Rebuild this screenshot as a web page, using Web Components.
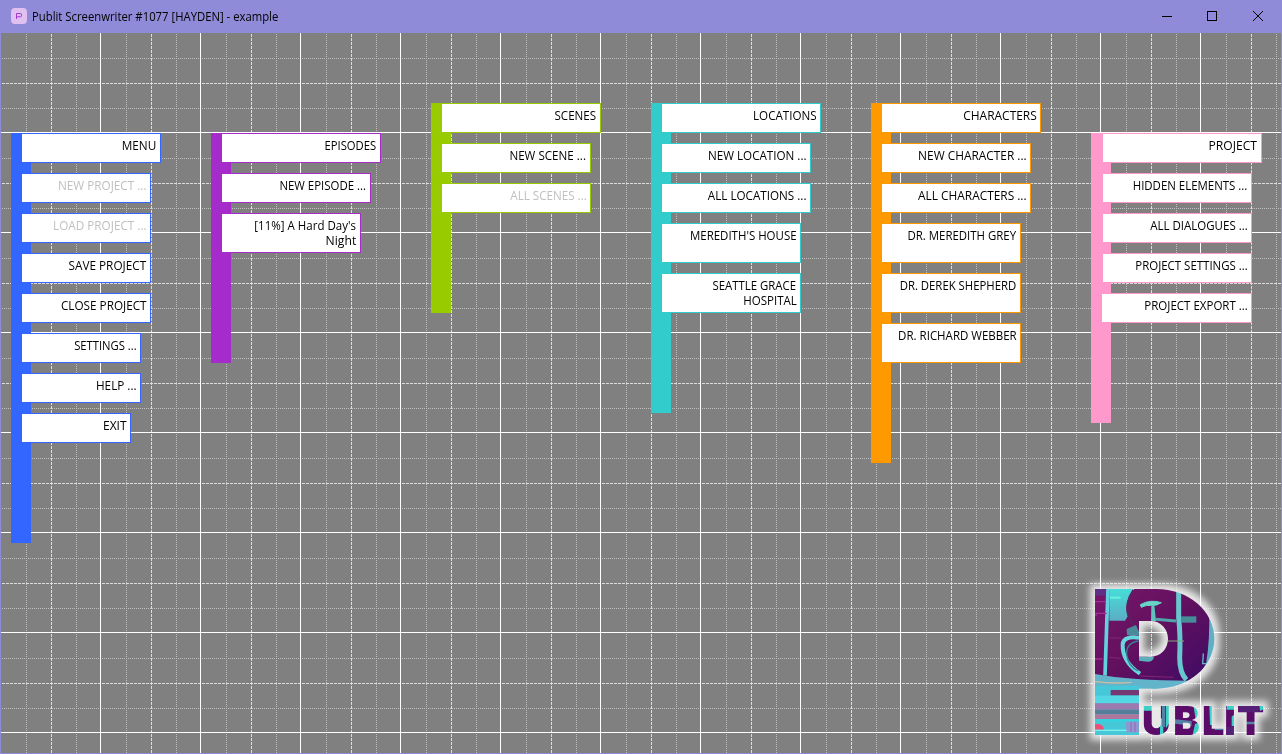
<!DOCTYPE html>
<html lang="en">
<head>
<meta charset="utf-8">
<title>Publit Screenwriter #1077 [HAYDEN] - example</title>
<style>
html,body{margin:0;height:100%;overflow:hidden;font-family:"Open Sans","Noto Sans",sans-serif}
</style>
</head>
<body>
<app-window>
  <title-bar slot="title">Publit Screenwriter #1077 [HAYDEN] - example</title-bar>
  <board-column color="#3366ff" style="margin:30px 0 0 10px;width:150px;height:410px">
    <board-item w="140" fit="34">MENU</board-item>
    <board-item w="130" fit="88" disabled>NEW PROJECT ...</board-item>
    <board-item w="130" fit="93" disabled>LOAD PROJECT ...</board-item>
    <board-item w="130" fit="77">SAVE PROJECT</board-item>
    <board-item w="130" fit="85">CLOSE PROJECT</board-item>
    <board-item w="120" fit="62">SETTINGS ...</board-item>
    <board-item w="120" fit="40">HELP ...</board-item>
    <board-item w="110" fit="23">EXIT</board-item>
  </board-column>
  <board-column color="#a52bcb" style="margin:30px 0 0 50px;width:170px;height:230px">
    <board-item w="160" fit="51">EPISODES</board-item>
    <board-item w="150" fit="86">NEW EPISODE ...</board-item>
    <board-item w="140" h="40" fit="101,30">[11%] A Hard Day's|Night</board-item>
  </board-column>
  <board-column color="#99cc00" style="margin-left:50px;width:170px;height:210px">
    <board-item w="160" fit="41">SCENES</board-item>
    <board-item w="150" fit="76">NEW SCENE ...</board-item>
    <board-item w="150" fit="76" disabled>ALL SCENES ...</board-item>
  </board-column>
  <board-column color="#33cccc" style="margin-left:50px;width:170px;height:310px">
    <board-item w="160" fit="63">LOCATIONS</board-item>
    <board-item w="150" fit="98">NEW LOCATION ...</board-item>
    <board-item w="150" fit="98">ALL LOCATIONS ...</board-item>
    <board-item w="140" h="40" fit="106">MEREDITH'S HOUSE</board-item>
    <board-item w="140" h="40" fit="83,53">SEATTLE GRACE|HOSPITAL</board-item>
  </board-column>
  <board-column color="#ff9900" style="margin-left:50px;width:170px;height:360px">
    <board-item w="160" fit="73">CHARACTERS</board-item>
    <board-item w="150" fit="108">NEW CHARACTER ...</board-item>
    <board-item w="150" fit="108">ALL CHARACTERS ...</board-item>
    <board-item w="140" h="40" fit="108">DR. MEREDITH GREY</board-item>
    <board-item w="140" h="40" fit="116">DR. DEREK SHEPHERD</board-item>
    <board-item w="140" h="40" fit="118">DR. RICHARD WEBBER</board-item>
  </board-column>
  <board-column color="#ff99cc" style="margin:30px 0 0 50px;width:171px;height:290px">
    <board-item w="160" inset="1" fit="48">PROJECT</board-item>
    <board-item w="150" inset="1" fit="114">HIDDEN ELEMENTS ...</board-item>
    <board-item w="150" inset="1" fit="97">ALL DIALOGUES ...</board-item>
    <board-item w="150" inset="1" fit="112">PROJECT SETTINGS ...</board-item>
    <board-item w="151" fit="103">PROJECT EXPORT ...</board-item>
  </board-column>
  <publit-logo slot="logo"></publit-logo>
</app-window>
<script>
const shadow = (el, html) => { el.attachShadow({mode:'open'}).innerHTML = html; return el.shadowRoot; };

// Scales each text line horizontally to its intended advance width.
const fitWidth = (span, width) => {
  const natural = span.getBoundingClientRect().width;
  if (natural) span.style.transform = `scaleX(${width / natural})`;
};

customElements.define('canvas-grid', class extends HTMLElement {
  connectedCallback() {
    let lines = '';
    const add = (pos, vertical) => {
      const k = pos / 25 % 4;
      const p = k === 0 ? pos - 1 : pos;
      const style = k === 0 ? 'stroke="#fff"' : k === 2 ? 'stroke="#dcdcdc" stroke-dasharray="3 1"' : 'stroke="#c0c0c0" stroke-dasharray="1 1"';
      const c = p + .5;
      const start = k === 0 ? 0 : 1;
      lines += vertical ? `<path d="M${c} ${start}V720" ${style}/>` : `<path d="M${start} ${c}H1280" ${style}/>`;
    };
    for (const rest of [1, 2, 0]) {
      for (let p = 25; p <= 1280; p += 25) if ((p / 25 % 4 % 2 ? 1 : p / 25 % 4) === rest) add(p, true);
      for (let p = 25; p <= 720; p += 25) if ((p / 25 % 4 % 2 ? 1 : p / 25 % 4) === rest) add(p, false);
    }
    shadow(this, `<style>:host{display:block;background:#808080}svg{display:block}</style>
      <svg width="1280" height="720" fill="none" shape-rendering="crispEdges">${lines}</svg>`);
  }
});

customElements.define('app-window', class extends HTMLElement {
  connectedCallback() {
    shadow(this, `<style>
      :host{display:flex;flex-direction:column;width:1282px;height:754px;box-sizing:border-box;background:#8f8bd8;border:solid #8f8bd8;border-width:0 1px 1px}
      .canvas{display:grid;height:720px;position:relative}
      canvas-grid,.columns{grid-area:1/1}
      .columns{display:flex;align-items:flex-start;padding-top:70px;position:relative}
      ::slotted(publit-logo){position:absolute;right:-1px;bottom:-1px}
    </style>
    <slot name="title"></slot>
    <div class="canvas"><canvas-grid></canvas-grid><div class="columns"><slot></slot></div><slot name="logo"></slot></div>`);
  }
});

customElements.define('title-bar', class extends HTMLElement {
  connectedCallback() {
    const root = shadow(this, `<style>
      :host{display:flex;align-items:center;height:33px;font-size:12px;color:#000;flex:none}
      .icon{margin:0 5px 1px 10px;flex:none}
      .text{display:inline-block;white-space:nowrap;transform-origin:left;line-height:16px}
      .buttons{margin-left:auto;flex:none}
    </style>
    <svg class="icon" width="16" height="16"><rect width="16" height="16" rx="4" fill="#dfc0f0"/><path d="M5.5 11V5.5H9.5Q10.5 5.5 10.5 7.2T9.5 8.8H5.5" fill="none" stroke="#a33bd0"/></svg>
    <span class="text"><slot></slot></span>
    <svg class="buttons" width="138" height="33" fill="none" stroke="#000"><path d="M19 16.5h10M64.500 11.500h9v9h-9z" shape-rendering="crispEdges"/><path d="M110 11l10 10M120 11l-10 10"/></svg>`);
    fitWidth(root.querySelector('.text'), 246.3);
  }
});

customElements.define('board-column', class extends HTMLElement {
  connectedCallback() {
    shadow(this, `<style>
      :host{--c:${this.getAttribute('color')};display:flex;flex-direction:column;align-items:flex-start;gap:10px;flex:none;box-sizing:border-box;padding-left:10px;background:linear-gradient(var(--c),var(--c)) 0 0/20px 100% no-repeat}
    </style><slot></slot>`);
  }
});

customElements.define('board-item', class extends HTMLElement {
  connectedCallback() {
    const fits = this.getAttribute('fit').split(',');
    const lines = this.textContent.split('|');
    const root = shadow(this, `<style>
      :host{display:block;box-sizing:border-box;flex:none;width:${this.getAttribute('w')}px;height:${this.getAttribute('h') || 30}px;
        margin-left:${this.getAttribute('inset') || 0}px;border:1px solid var(--c);background:#fff;padding:4px 3.600px 0 0;
        font-size:12px;line-height:15px;color:${this.hasAttribute('disabled') ? '#c0c0c0' : '#000'}}
      div{display:flex;justify-content:flex-end}
      span{display:inline-block;white-space:nowrap;transform-origin:right}
    </style>${lines.map(t => `<div><span>${t}</span></div>`).join('')}`);
    root.querySelectorAll('span').forEach((s, i) => fitWidth(s, +fits[i] + .6));
  }
});

customElements.define('publit-logo', class extends HTMLElement {
  connectedCallback() {
    shadow(this, `<style>:host{display:block}svg{display:block}text{font:900 119px Inter,sans-serif}</style>
    <svg width="202" height="184" viewBox="0 0 606 552">
      <defs>
        <linearGradient id="violet" x2="1" y2="1"><stop stop-color="#80196f"/><stop offset=".35" stop-color="#62105f"/><stop offset=".7" stop-color="#350a66"/></linearGradient>
        <linearGradient id="aqua" x2="0" y2="1"><stop stop-color="#46ddd8"/><stop offset="1" stop-color="#5badc5"/></linearGradient>
        <linearGradient id="rim" x2="1"><stop stop-color="#68d5df"/><stop offset="1" stop-color="#539db6"/></linearGradient>
        <mask id="shape" maskUnits="userSpaceOnUse" x="0" y="0" width="606" height="552">
          <rect x="45" y="57" width="185" height="299" fill="#fff"/>
          <ellipse cx="230" cy="206.500" rx="173" ry="149.500" fill="#fff"/>
          <rect x="177" y="153" width="36" height="107"/><ellipse cx="213" cy="206.500" rx="51" ry="53.500"/>
          <rect x="45" y="57" width="132" height="438" fill="#fff"/>
        </mask>
        <pattern id="letters" patternUnits="userSpaceOnUse" width="606" height="552">
          <rect width="606" height="552" fill="#5b0c68"/>
          <path d="M188 405h28v17h-28zM258 405h12v50l-12 20zM240 445h10v50h-10zM340 405h20v40l-12 8zM345 462l15-5v28l-22 10zM388 405h8l6 60h-12zM440 405h28v14h-28zM455 440l12-10v38h-12zM538 405h14v12l-12 6z" fill="#3ed0c6"/>
          <path d="M246 405h10v66h-10zM285 448l50 5v14l-50-6zM404 474h26v6h-26zM498 455h30v8h-30z" fill="#5680a5"/>
          <path d="M478 405h58v22h-58zM440 470h28v25h-28z" fill="#542078"/>
        </pattern>
        <filter id="glow" filterUnits="userSpaceOnUse" x="0" y="0" width="606" height="552" color-interpolation-filters="sRGB">
          <feMorphology in="SourceAlpha" operator="dilate" radius="15" result="d"/><feGaussianBlur in="d" stdDeviation="11" result="b"/>
          <feFlood flood-color="#fff" flood-opacity=".82"/><feComposite in2="b" operator="in" result="g"/>
          <feMerge><feMergeNode in="g"/><feMergeNode in="SourceGraphic"/></feMerge>
        </filter>
      </defs>
      <g filter="url(#glow)">
        <g mask="url(#shape)">
          <rect width="606" height="552" fill="url(#violet)"/>
          <path d="M45 57h35v20H45z" fill="#603087"/>
          <path d="M88 57h75q-35 42-20 82l-8 13H88z" fill="url(#aqua)"/>
          <path d="M90 83h32" stroke="#5ff0df" stroke-width="7"/>
          <path d="M84 57l-4 110-5 150" fill="none" stroke="#62d2de" stroke-width="11"/>
          <path d="M48 138v-8h32M45 95h32M45 267h22" fill="none" stroke="#a42d98" stroke-width="4"/>
          <path d="M160 60q-25 36-15 74l24 52" fill="none" stroke="#5b225e" stroke-width="6"/>
          <path d="M140 177l28-12 9 20v10h-36z" fill="#4b8a99"/>
          <path d="M177 203q-47-6-49 20-2 52 52 88" fill="none" stroke="#68d7dc" stroke-width="12"/>
          <path d="M176 213q-38 5-36 40 4 35 34 50" fill="none" stroke="#357f95" stroke-width="4"/>
          <path d="M181 104q30-17 63-6-14 10-30 8t-30 6z" fill="#66d6c8" stroke="#66d6c8" stroke-width="3"/>
          <path d="M214 105l-1 48h15l-5-48z" fill="#5cc3bd"/>
          <path d="M228 148l60 5" stroke="#4fa6aa" stroke-width="9"/>
          <path d="M296 57v86q6 55 3 120 0 45 20 66" fill="none" stroke="#67c6ce" stroke-width="15"/>
          <path d="M303 139h46v19h-46z" fill="#458c99"/><path d="M264 213h48" stroke="#81a776" stroke-width="3"/>
          <path d="M86 204h38M88 262l34 3M180 318l100 4" stroke="#812676" stroke-width="3"/>
          <path d="M177 260h45q-3 16-20 15l-25-3z" fill="#5cb0bc"/>
          <path d="M370 250l-2 31h10" fill="none" stroke="#69b7c7" stroke-width="4"/>
          <path d="M387 110q4 95-9 172-20 36-50 52l5 30 85-70V110z" fill="#5fb0c4"/>
          <path d="M45 312q110 20 285 20v40H45z" fill="#62b4cb"/>
          <path d="M45 335q60 7 110 2" fill="none" stroke="#d0bca0" stroke-width="4"/>
          <path d="M45 347h132v148H45z" fill="#46c8d8"/>
          <path d="M92 360h85v16H92z" fill="#753873"/>
          <path d="M45 377h132v22H45z" fill="#53d7e4"/><path d="M45 400h132v19H45z" fill="#9c79ae"/>
          <path d="M45 419h132v14H45z" fill="#557e9b"/><path d="M45 433h132v14H45z" fill="#ad779d"/>
          <path d="M45 448h132v8H45z" fill="#37d2df"/>
          <path d="M45 463q24-4 27 16H45z" fill="#ef4e79"/><path d="M138 455h39v32h-39z" fill="#8a9acd"/>
          <path d="M45 481h95" stroke="#7bf1ec" stroke-width="4"/><path d="M153 455v30M165 455v30" stroke="#a36bc0" stroke-width="4"/>
        </g>
        <text x="186 280 366 433 471" y="494" fill="url(#letters)">UBLIT</text>
      </g>
    </svg>`);
  }
});
</script>
</body>
</html>
